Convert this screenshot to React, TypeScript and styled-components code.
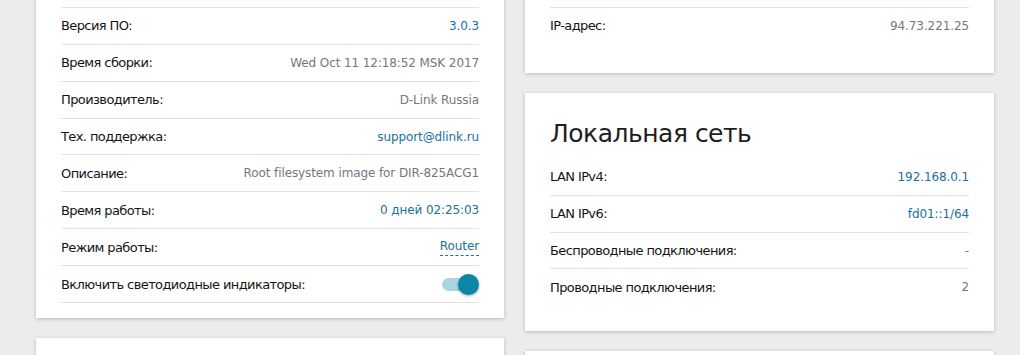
import React from 'react'
import styled, { createGlobalStyle } from 'styled-components'

const GlobalStyle = createGlobalStyle`
  html, body {
    margin: 0;
    padding: 0;
    background: #ececec;
    overflow: hidden;
  }
  body {
    font-family: "DejaVu Sans", "Liberation Sans", sans-serif;
    color: #1c1c1c;
  }
`

const Page = styled.div`
  display: grid;
  grid-template-columns: 468px 469px;
  column-gap: 21px;
  align-items: start;
  padding-left: 36px;
  margin-top: -95px;
`

const Column = styled.div`
  display: flex;
  flex-direction: column;
  gap: 20px;
`

const Card = styled.section<{ $pb: number }>`
  background: #fff;
  padding: 25px 25px ${(p) => p.$pb}px;
  box-shadow: 0 1px 4px rgba(0, 0, 0, 0.22);
`

const Title = styled.h2`
  margin: 0;
  height: 41px;
  font-size: 25px;
  font-weight: normal;
  line-height: 32px;
  color: #1e1e1e;
  letter-spacing: -0.5px;
`

const Row = styled.div<{ $last?: boolean }>`
  display: flex;
  align-items: center;
  justify-content: space-between;
  box-sizing: border-box;
  height: 36.9px;
  border-bottom: 1px solid ${(p) => (p.$last ? 'transparent' : '#e3e3e3')};
`

const Label = styled.span`
  font-size: 13px;
  color: #141414;
  letter-spacing: -0.6px;
`

const Value = styled.span<{ $tone?: 'blue' | 'gray' }>`
  font-size: 12px;
  color: ${(p) => (p.$tone === 'blue' ? '#216f9c' : '#777')};
  letter-spacing: -0.1px;
`

const ModeLink = styled(Value)`
  border-bottom: 1px dashed #216f9c;
  line-height: 15px;
  padding-bottom: 1px;
`

const Switch = styled.span`
  position: relative;
  display: inline-block;
  width: 36px;
  height: 13px;
  border-radius: 7px;
  background: #a9d5e2;
  margin-right: 1px;
`

const Knob = styled.span`
  position: absolute;
  right: -1px;
  top: -4px;
  width: 21px;
  height: 21px;
  border-radius: 50%;
  background: #0a86a6;
  box-shadow: 0 1px 3px rgba(0, 0, 0, 0.35);
`

type Item = { label: string; value: string; tone?: 'blue' | 'gray' }

const systemRows: Item[] = [
  { label: 'Модель:', value: 'DIR-825ACG1', tone: 'gray' },
  { label: 'Версия ПО:', value: '3.0.3', tone: 'blue' },
  { label: 'Время сборки:', value: 'Wed Oct 11 12:18:52 MSK 2017', tone: 'gray' },
  { label: 'Производитель:', value: 'D-Link Russia', tone: 'gray' },
  { label: 'Тех. поддержка:', value: 'support@dlink.ru', tone: 'blue' },
  { label: 'Описание:', value: 'Root filesystem image for DIR-825ACG1', tone: 'gray' },
  { label: 'Время работы:', value: '0 дней 02:25:03', tone: 'blue' },
]

const lanRows: Item[] = [
  { label: 'LAN IPv4:', value: '192.168.0.1', tone: 'blue' },
  { label: 'LAN IPv6:', value: 'fd01::1/64', tone: 'blue' },
  { label: 'Беспроводные подключения:', value: '-', tone: 'gray' },
  { label: 'Проводные подключения:', value: '2', tone: 'gray' },
]

const App = () => {
  return (
    <>
      <GlobalStyle />
      <Page>
        <Column>
          <Card $pb={15}>
            <Title>Информация о системе</Title>
            {systemRows.map((r) => (
              <Row key={r.label}>
                <Label>{r.label}</Label>
                <Value $tone={r.tone}>{r.value}</Value>
              </Row>
            ))}
            <Row>
              <Label>Режим работы:</Label>
              <ModeLink $tone="blue">Router</ModeLink>
            </Row>
            <Row>
              <Label>Включить светодиодные индикаторы:</Label>
              <Switch>
                <Knob />
              </Switch>
            </Row>
          </Card>
          <Card $pb={28}>
            <Title>Wi-Fi</Title>
          </Card>
        </Column>
        <Column>
          <Card $pb={28}>
            <Title>Интернет</Title>
            <Row>
              <Label>Статус подключения:</Label>
              <Value $tone="blue">Подключено</Value>
            </Row>
            <Row $last>
              <Label>IP-адрес:</Label>
              <Value $tone="gray">94.73.221.25</Value>
            </Row>
          </Card>
          <Card $pb={25}>
            <Title>Локальная сеть</Title>
            {lanRows.map((r, i) => (
              <Row key={r.label} $last={i === lanRows.length - 1}>
                <Label>{r.label}</Label>
                <Value $tone={r.tone}>{r.value}</Value>
              </Row>
            ))}
          </Card>
          <Card $pb={28}>
            <Title>Wi-Fi клиенты</Title>
          </Card>
        </Column>
      </Page>
    </>
  )
}

export default App
